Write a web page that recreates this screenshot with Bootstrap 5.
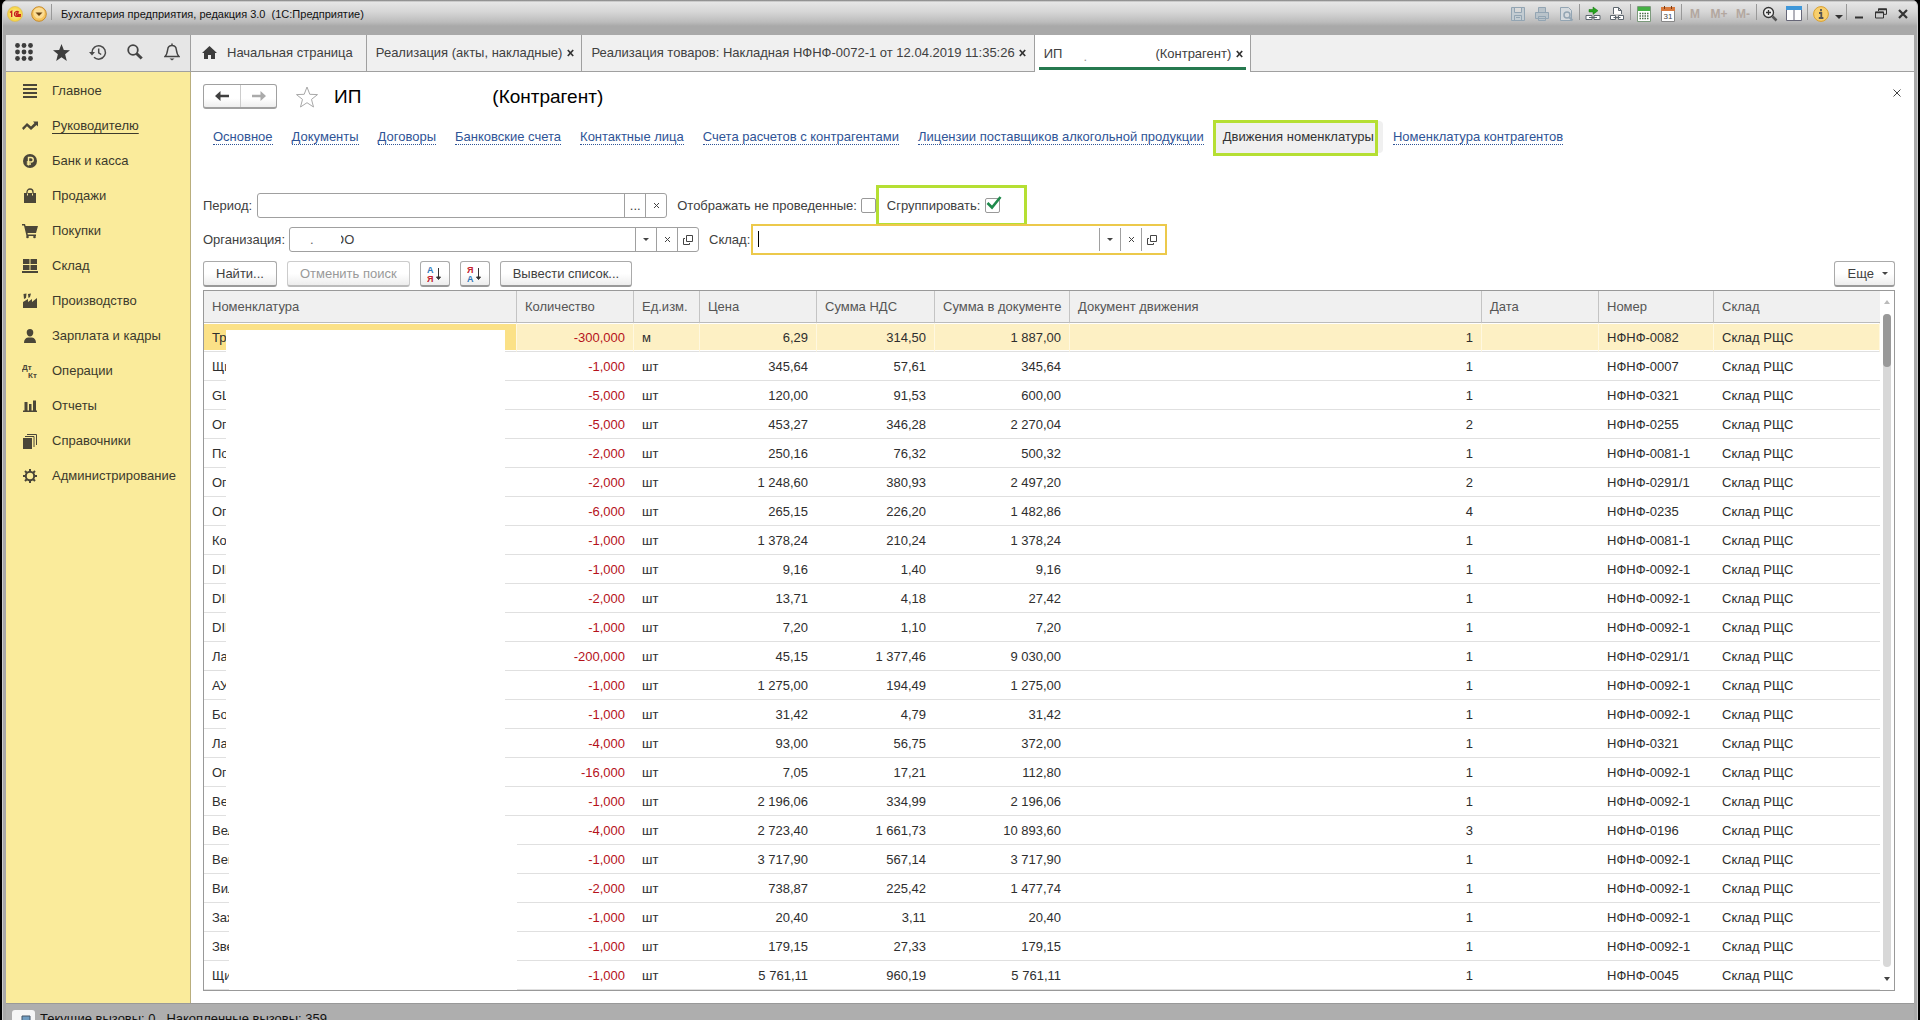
<!DOCTYPE html>
<html lang="ru">
<head>
<meta charset="utf-8">
<meta name="viewport" content="width=device-width, initial-scale=1">
<title>Бухгалтерия предприятия, редакция 3.0 (1С:Предприятие)</title>
<link href="https://cdn.jsdelivr.net/npm/bootstrap@5.3.0/dist/css/bootstrap.min.css" rel="stylesheet">
<style>
  :root { --ink:#404040; --line:#a0a0a0; --panel:#f0f0f0; --lime:#b5df33; }
  body { height:100vh; overflow:hidden; font-family:"Liberation Sans",Arial,sans-serif; font-size:13px; line-height:16px; color:var(--ink); background:#000; }
  button, input { font:inherit; color:inherit; }
  svg { display:block; flex:none; }
  .frame { min-height:100vh; margin:0 2px; padding:0 3px; background:#a8a8a8; border-left:1px solid #ccc; border-right:1px solid #ccc; border-radius:6px 6px 0 0; overflow:hidden; }
  .titlebar { height:35px; padding:1px 3px 9px 4px; margin:0 -3px; color:#111; font-size:11px; background:linear-gradient(#777 0,#e6e6e6 2px,#d6d6d6 12px,#bcbcbc 22px,#a9a9a9 26px,#a9a9a9 100%); }
  .bare { border:0; background:none; padding:0; display:flex; align-items:center; justify-content:center; }
  .tb { width:24px; height:24px; }
  .win { width:22px; height:24px; }
  .drop { width:12px; height:24px; padding-top:6px; }
  .sep { width:1px; height:16px; margin:0 1px 4px; background:#999; }
  .mem { color:#b3a79f; font-weight:bold; font-size:12px; }
  .tools { height:37px; background:var(--panel); border-bottom:1px solid var(--line); }
  .quick { width:185px; flex:none; background:#e6e6e6; border-right:1px solid var(--line); padding:0 0 2px 0; }
  .quick .bare { width:37px; }
  .tab { height:36px; padding:0 6px 0 9px; gap:3px; border-right:1px solid var(--line); white-space:nowrap; color:var(--ink); text-decoration:none; }
  .tab.home { padding:0 13px 0 11px; gap:10px; }
  .tab.on { background:#fff; box-shadow:inset 4px 0 #fff, inset -4px 0 #fff, inset 0 -2px #fff, inset 0 -5px #26794f; height:37px; }
  .tab .bare { width:10px; height:16px; }
  .gap-name { width:87px; padding-left:18px; padding-top:6px; color:#999; }
  .side { width:185px; flex:none; background:#faeb9b; border-right:1px solid #b9ae7d; padding-top:1px; }
  .side a { height:35px; padding-left:16px; gap:14px; color:#3c3a2c; text-decoration:none; }
  .side a.hot span { text-decoration:underline; text-underline-offset:3px; }
  .side svg { fill:#4a4638; }
  .page { background:#fff; padding:12px 19px 12px 12px; min-width:0; }
  .pair { border:1px solid var(--line); border-bottom-width:2px; border-radius:3px; background:linear-gradient(#fff 60%,#eee); height:25px; }
  .pair .bare { width:36px; height:22px; }
  .pair .bare + .bare { border-left:1px solid #ccc; }
  .star { margin:0 15px 0 18px; }
  .mask-name { width:131px; }
  .shut { margin-right:-6px; }
  h1 { font-size:19px; line-height:24px; color:#000; margin:0; font-weight:400; }
  .links { margin-top:12px; padding-left:1px; gap:1px; }
  .links a { padding:8px 9px; color:#2f5496; text-decoration:none; white-space:nowrap; position:relative; }
  .links a span { border-bottom:1px dotted #2f5496; }
  .links a.now { background:#f0f0f0; color:#333; border-radius:4px; }
  .links a.now span { border:0; }
  .ring { position:absolute; border:3px solid var(--lime); pointer-events:none; }
  .links .ring { inset:-1px 5px -3px -1px; }
  .filters { margin-top:40px; gap:9px; }
  .cap { margin-right:5px; }
  .fld { height:25px; width:410px; border:1px solid var(--line); border-radius:3px; background:#fff; margin-right:10px; position:relative; }
  .fld input { border:0; outline:0; background:none; min-width:0; flex:1; padding:0 4px; }
  .fld .bare { width:21px; border-left:1px solid var(--line); }
  .fld.focus { border:2px solid #ecc94b; width:416px; height:31px; border-radius:0; padding:2px 3px 2px 0; margin:-3px 0 -3px 1px; }
  .fld.focus .bare { height:23px; }
  .caret { width:1px; height:16px; margin:3px 0 0 5px; background:#000; }
  .fld input.org { padding-left:44px; }
  .hide-org { position:absolute; left:20px; top:4px; width:31px; height:17px; background:#fff; color:#666; }
  .chk { appearance:none; width:15px; height:15px; margin:0; border:1px solid #999; border-radius:2px; background:#fff; }
  .tickwrap { position:relative; display:flex; }
  .tickwrap svg { position:absolute; left:1px; top:-2px; pointer-events:none; }
  .grouped { position:relative; padding-left:11px; }
  .grouped .ring { inset:-13px -27px -12px 0; }
  .cmds { gap:10px; margin-top:9px; height:26px; }
  .cmd { height:26px; border:1px solid #aaa; border-bottom:2px solid #999; border-radius:3px; background:linear-gradient(#fff 50%,#ededed); padding:0 12px; white-space:nowrap; }
  .cmd:disabled { color:#999; border-color:#ccc; border-bottom-color:#bbb; }
  .cmd.pic { padding:0; width:30px; display:flex; align-items:center; justify-content:center; }
  .cmd.more { padding:0 6px 0 13px; gap:8px; }
  .grid { margin-top:3px; border:1px solid #999; position:relative; }
  .grid table { table-layout:fixed; width:100%; border-collapse:separate; border-spacing:0; }
  .grid th { height:32px; padding:0 8px; background:#f0f0f0; font-weight:400; color:#555; border-bottom:1px solid #bbb; border-right:1px solid #c4c4c4; white-space:nowrap; }
  .grid th:last-child { border-right:0; }
  .grid td { height:29px; padding:1px 8px 0; border-bottom:1px solid #e0e0e0; white-space:nowrap; color:#2e2e2e; }
  .grid td.num, .grid td.neg { text-align:right; padding-right:9px; }
  .grid td.neg { color:#b5121b; }
  .grid tr.sel td { background:#fdf0c4; border-right:1px solid #fff8e0; box-shadow:inset 0 1px #fff, inset 0 -1px #fff; }
  .grid tr.sel td.num, .grid tr.sel td.neg { padding-right:8px; }
  .grid tr.sel td:first-child { background:#fbe187; }
  .dot { margin-right:4px; color:#999; }
  .cover { position:absolute; background:#fff; }
  .cover.up { left:22px; width:279px; top:39px; height:488px; }
  .cover.low { left:25px; width:288px; top:526px; bottom:0; }
  .scroller { width:14px; flex:none; padding:9px 0; display:flex; flex-direction:column; align-items:center; gap:10px; }
  .track { width:8px; flex:1; border-radius:4px; background:#d8d8d8; }
  .thumb { height:53px; border-radius:4px; background:#999; }
  .status { height:40px; padding:6px; background:#aeaeae; border-top:1px solid #999; color:#111; gap:5px; }
  .stat { width:23px; height:23px; background:#f6f6f6; border-radius:3px; }
  .stat-text { padding-top:1px; }
</style>
</head>
<body>
<div class="frame">
  <header class="titlebar d-flex align-items-center">
    <button class="bare me-2" aria-label="1С"><svg width="16" height="16" viewBox="0 0 16 16"><defs><radialGradient id="g1"><stop offset="0" stop-color="#fff6a0"/><stop offset="1" stop-color="#f4cf3c"/></radialGradient></defs><circle cx="8" cy="8" r="7.6" fill="url(#g1)" stroke="#d9b95a" stroke-width=".6"/><path d="M3 6.5 4.7 5.3V11M11.8 6.3C10.600 5 7.400 5.200 7.400 8S9.700 10.200 14 10.200M11.500 7.600C10.500 6.700 9.200 7 9.200 8.100S10.500 8.700 14 8.700" fill="none" stroke="#c8201c" stroke-width="1.300"/></svg></button>
    <button class="bare" aria-label="Меню"><svg width="16" height="16" viewBox="0 0 16 16"><circle cx="8" cy="8" r="7.300" fill="#f6c35c" stroke="#c58a2c"/><circle cx="8" cy="7" r="5.500" fill="#fbdc94"/><path d="M4.500 6.500h7L8 10z" fill="#6a4312"/></svg></button>
    <span class="sep ms-1"></span>
    <span class="ms-2">Бухгалтерия предприятия, редакция 3.0 &nbsp;(1С:Предприятие)</span>
    <div class="ms-auto d-flex align-items-center">
      <button class="bare tb" aria-label="Сохранить"><svg width="16" height="16" fill="none" stroke="#93a5b3"><path d="M1.500 1.500h13v13h-13zM4.500 1.500v5h7v-5M4.500 14.500v-5h7v5M6 11.500h4" fill="#c3ccd2"/></svg></button>
      <button class="bare tb" aria-label="Печать"><svg width="16" height="16" fill="#b9c3ca" stroke="#93a5b3"><path d="M4.500 6V1.500h7V6M1.500 6.500h13v6h-13zM4.500 10.500h7v4h-7z"/></svg></button>
      <button class="bare tb" aria-label="Просмотр"><svg width="16" height="16" fill="#d5dade" stroke="#93a5b3"><path d="M2.500 1.500h8l3 3v10h-11z"/><circle cx="9" cy="9" r="3" stroke-width="1.500"/><path d="m11 11 3.500 3.500" stroke-width="2"/></svg></button>
      <span class="sep"></span>
      <button class="bare tb" aria-label="Перейти по ссылке"><svg width="18" height="16" fill="none"><path d="M5 3.500h4V1l5 3.700-5 3.700V6H5z" fill="#27a51f" stroke="#14730f" stroke-width=".5"/><path d="M2 9.500h6v4H2zM10 9.500h6v4h-6zM5 11.500h8" stroke="#5d666e" fill="#fff"/></svg></button>
      <button class="bare tb" aria-label="Получить ссылку"><svg width="16" height="16" fill="#fff" stroke="#5d666e"><path d="M4.500 8V1.500h5l3 3V8M9.500 1.500v3h3"/><path d="M1.500 9.500h5v4h-5zM9.500 9.500h5v4h-5zM4.500 11.500h7"/></svg></button>
      <span class="sep"></span>
      <button class="bare tb" aria-label="Калькулятор"><svg width="14" height="16"><path fill="#fff" stroke="#7c9a7c" d="M.5.5h13v15H.5z"/><path fill="#45b044" d="M1 1h12v4H1z"/><path d="M2.500 7.500h10M2.500 10h10M2.500 12.500h10" stroke="#4c6e4c" stroke-width="1.500" stroke-dasharray="1.500 1"/></svg></button>
      <button class="bare tb" aria-label="Календарь"><svg width="14" height="16"><path fill="#fff" stroke="#888" d="M.5 1.500h13v14H.5z"/><path fill="#d9793c" d="M0 1h14v4H0z"/><path d="M3.500 0v3M10.500 0v3" stroke="#7a3d14"/><text x="7" y="13" font-size="8" font-family="Liberation Sans" text-anchor="middle" fill="#444">31</text></svg></button>
      <span class="sep"></span>
      <button class="bare tb mem">M</button><button class="bare tb mem">M+</button><button class="bare tb mem">M-</button>
      <span class="sep"></span>
      <button class="bare tb" aria-label="Масштаб"><svg width="16" height="16" fill="#eee" stroke="#333" stroke-width="1.300"><circle cx="6.500" cy="6.500" r="5"/><path d="M4 6.500h5M6.500 4v5"/><path d="m10.500 10.500 4 4" stroke-width="2.500" stroke="#555"/></svg></button>
      <button class="bare tb" aria-label="Панели"><svg width="16" height="16"><path fill="#fff" stroke="#667" d="M.5.5h15v14H.5z"/><path fill="#3f97d9" d="M0 0h16v4H0z"/><path d="M8 4v11" stroke="#667"/></svg></button>
      <span class="sep"></span>
      <button class="bare tb" aria-label="О программе"><svg width="16" height="16"><circle cx="8" cy="8" r="7.400" fill="#f8cf6d" stroke="#d9a030"/><path d="M8 3v2.200M6 7h2.300v5M5.800 12h4.600" stroke="#555" stroke-width="1.800" fill="none"/></svg></button>
      <button class="bare drop" aria-label="Ещё"><svg width="8" height="4"><path d="M0 0h8L4 4z" fill="#333"/></svg></button>
      <span class="sep"></span>
      <button class="bare win" aria-label="Свернуть"><svg width="10" height="12"><path d="M1 9.500h8" stroke="#333" stroke-width="2"/></svg></button>
      <button class="bare win" aria-label="Восстановить"><svg width="12" height="11" fill="none" stroke="#333"><path d="M3.500 3V.8h8v5.500H9M.5 4h8v6h-8z"/><path d="M3 1.500h9M0 4.500h9" stroke-width="1.500"/></svg></button>
      <button class="bare win" aria-label="Закрыть"><svg width="10" height="10"><path d="m1 1 8 8M9 1 1 9" stroke="#333" stroke-width="2.200"/></svg></button>
    </div>
  </header>

  <div class="tools d-flex">
    <div class="quick d-flex">
      <button class="bare" aria-label="Все функции"><svg width="18" height="18" fill="#3d3d3d"><g id="dots"><circle cx="2.500" cy="2.500" r="2.400"/><circle cx="9" cy="2.500" r="2.400"/><circle cx="15.500" cy="2.500" r="2.400"/></g><use href="#dots" y="6.500"/><use href="#dots" y="13"/></svg></button>
      <button class="bare" aria-label="Избранное"><svg width="17" height="17" viewBox="0 0 16 16" fill="#3d3d3d"><path d="m8 0 2.200 5.700 5.800.2-4.600 3.700L13 16l-5-3.500L3 16l1.600-6.400L0 5.900l5.800-.2z"/></svg></button>
      <button class="bare" aria-label="История"><svg width="18" height="17" fill="none" stroke="#4a4a4a" stroke-width="1.500"><path d="M3 8.500A6.700 6.700 0 1 1 5 13.200M9.700 4.500v4.300l2.500 1.700"/><path d="M0 8h6L3 11.500z" fill="#4a4a4a" stroke="none"/></svg></button>
      <button class="bare" aria-label="Поиск"><svg width="16" height="16" fill="none" stroke="#444"><circle cx="6" cy="6" r="4.800" stroke-width="1.800"/><path d="m9.500 9.500 5.200 5" stroke-width="3"/></svg></button>
      <button class="bare" aria-label="Уведомления"><svg width="16" height="18" fill="none" stroke="#444" stroke-width="1.500"><path d="M1 13.500c2-1.800 2.200-3.500 2.700-7C4 3.800 5.500 2.500 8 2.500s4 1.300 4.300 4c.5 3.500.7 5.200 2.700 7zM8 .5v2"/><path d="M5.500 15.500h5L8 17.500z" fill="#444" stroke="none"/></svg></button>
    </div>
    <a href="#" class="tab home d-flex align-items-center"><svg width="15" height="14" fill="#3d3d3d"><path d="M7.500 0 15 7h-2v6H9V9H6v4H2V7H0z"/></svg>Начальная страница</a>
    <a href="#" class="tab d-flex align-items-center">Реализация (акты, накладные)<span class="bare"><svg width="7" height="8"><use href="#xb"/></svg></span></a>
    <a href="#" class="tab d-flex align-items-center">Реализация товаров: Накладная НФНФ-0072-1 от 12.04.2019 11:35:26<span class="bare"><svg width="7" height="8"><use href="#xb"/></svg></span></a>
    <a href="#" class="tab on d-flex align-items-center">ИП<span class="gap-name">.</span>(Контрагент)<span class="bare"><svg width="7" height="8"><path id="xb" d="m.8 1 5.400 6M6.200 1 .8 7" stroke="#333" stroke-width="1.700"/></svg></span></a>
  </div>

  <div class="d-flex">
    <nav class="side d-flex flex-column">
      <a href="#" class="d-flex align-items-center"><svg width="16" height="16"><path d="M1 1h14v2H1zM1 5h14v2H1zM1 9h14v2H1zM1 13h14v2H1z"/></svg><span>Главное</span></a>
      <a href="#" class="hot d-flex align-items-center"><svg width="16" height="16"><path d="M0 10 5 5l4 3.500L12.500 5 11 3.500h5v5L14.500 7 9 12 5 8.300 1.500 12z"/></svg><span>Руководителю</span></a>
      <a href="#" class="d-flex align-items-center"><svg width="16" height="16"><circle cx="8" cy="8" r="7"/><path d="M6.500 12.500V4.500H9a2 2 0 0 1 0 4.500H4.800M4.800 11H9" stroke="#faeb9b" stroke-width="1.400" fill="none"/></svg><span>Банк и касса</span></a>
      <a href="#" class="d-flex align-items-center"><svg width="16" height="16"><path d="M2 5h12v10H2z"/><path d="M5 7V4a3 3 0 0 1 6 0v3" fill="none" stroke="#4a4638" stroke-width="1.300"/><path d="M5.500 5.500v2M10.500 5.500v2" stroke="#faeb9b"/></svg><span>Продажи</span></a>
      <a href="#" class="d-flex align-items-center"><svg width="16" height="16"><path d="M0 1h3l.6 2H16l-2 7H5.500l.3 1.500H14V13H4.500L2 2.500H0z"/><circle cx="5.500" cy="14" r="1.300"/><circle cx="12.500" cy="14" r="1.300"/></svg><span>Покупки</span></a>
      <a href="#" class="d-flex align-items-center"><svg width="16" height="16"><path d="M1 1h6.500v5H1zM8.500 1H15v5H8.500zM1 7h6.500v5H1zM8.500 7H15v5H8.500zM0 13h16v2H0z"/></svg><span>Склад</span></a>
      <a href="#" class="d-flex align-items-center"><svg width="16" height="16"><path d="M1 15V9l5-3v3l4-3v3l5-4v10zM1.500 1l3-.5L4 5l-2 1zM6 1l3-.5L8 4 6.500 5z"/></svg><span>Производство</span></a>
      <a href="#" class="d-flex align-items-center"><svg width="16" height="16"><path d="M8 1c2.200 0 3.300 1.500 3.300 3.500S10 8.500 8 8.500 4.700 6.500 4.700 4.500 5.800 1 8 1zM2 15c0-3.500 1.500-5 4-5.500h4c2.500.5 4 2 4 5.500z"/></svg><span>Зарплата и кадры</span></a>
      <a href="#" class="d-flex align-items-center"><svg width="16" height="16" font-family="Liberation Sans" font-weight="bold" font-size="8"><text x="0" y="7">Дт</text><text x="6" y="15">Кт</text></svg><span>Операции</span></a>
      <a href="#" class="d-flex align-items-center"><svg width="16" height="16"><path d="M1 12.500h14V14H1zM2.500 4h3v9h-3zM7 6h2.500v7H7zM11 2.500h3V13h-3z"/></svg><span>Отчеты</span></a>
      <a href="#" class="d-flex align-items-center"><svg width="16" height="16"><path d="M1 5h9v11H1z"/><path d="M3 3.500h9V14M5 1.500h9.500V12" fill="none" stroke="#4a4638"/></svg><span>Справочники</span></a>
      <a href="#" class="d-flex align-items-center"><svg width="16" height="16"><circle cx="8" cy="8" r="4.200" fill="none" stroke="#4a4638" stroke-width="2"/><path d="M8 1v3M8 12v3M1 8h3M12 8h3M3 3l2 2M11 11l2 2M13 3l-2 2M5 11l-2 2" stroke="#4a4638" stroke-width="2"/></svg><span>Администрирование</span></a>
    </nav>

    <main class="page flex-grow-1">
      <div class="d-flex align-items-center">
        <div class="pair d-flex">
          <button class="bare" aria-label="Назад"><svg width="14" height="10"><path d="M0 5 5.500 0v3.700H14v2.600H5.500V10z" fill="#404040"/></svg></button>
          <button class="bare" aria-label="Вперед"><svg width="14" height="10"><path d="M14 5 8.500 0v3.700H0v2.600h8.500V10z" fill="#aaa"/></svg></button>
        </div>
        <button class="bare star" aria-label="В избранное"><svg width="24" height="22"><path d="m12 1 2.800 7.300 7.700.3-6 4.800 2 7.600-6.500-4.300L5.500 21l2-7.600-6-4.800 7.700-.3z" fill="#fff" stroke="#a8a8a8"/></svg></button>
        <h1 class="d-flex">ИП<span class="mask-name"></span>(Контрагент)</h1>
        <button class="bare shut ms-auto mb-2" aria-label="Закрыть форму"><svg width="8" height="8"><path d="m.5.500 7 7M7.500.500l-7 7" stroke="#444"/></svg></button>
      </div>

      <nav class="links d-flex">
        <a href="#"><span>Основное</span></a><a href="#"><span>Документы</span></a><a href="#"><span>Договоры</span></a><a href="#"><span>Банковские счета</span></a><a href="#"><span>Контактные лица</span></a><a href="#"><span>Счета расчетов с контрагентами</span></a><a href="#"><span>Лицензии поставщиков алкогольной продукции</span></a><a href="#" class="now"><span>Движения номенклатуры</span><i class="ring"></i></a><a href="#"><span>Номенклатура контрагентов</span></a>
      </nav>

      <div class="filters d-flex flex-column">
        <div class="d-flex align-items-center">
          <label for="per" class="cap">Период:</label>
          <div class="fld d-flex"><input id="per" type="text"><button class="bare" aria-label="Выбрать период">...</button><button class="bare" aria-label="Очистить"><svg width="7" height="7"><use href="#xs"/></svg></button></div>
          <label for="np" class="me-1">Отображать не проведенные:</label>
          <input id="np" type="checkbox" class="chk">
          <div class="grouped d-flex align-items-center"><label for="gr" class="cap">Сгруппировать:</label><span class="tickwrap"><input id="gr" type="checkbox" class="chk" checked><svg width="16" height="15"><path d="m1.500 7 4.500 4.500L14.500 1" fill="none" stroke="#1f8a4c" stroke-width="2.600"/></svg></span><i class="ring"></i></div>
        </div>
        <div class="d-flex align-items-center">
          <label for="org" class="me-1">Организация:</label>
          <div class="fld d-flex"><input id="org" type="text" class="org" value="ОО"><span class="hide-org">.</span><button class="bare" aria-label="Список"><svg width="6" height="3"><path id="car" d="M0 0h6L3 3z" fill="#444"/></svg></button><button class="bare" aria-label="Очистить"><svg width="7" height="7"><path id="xs" d="m1 1 5 5M6 1 1 6" stroke="#444"/></svg></button><button class="bare" aria-label="Открыть"><svg width="10" height="10"><path id="op" d="M3.500.5h6v6h-6zM2 3.500H.5v6h6V8" fill="none" stroke="#444"/></svg></button></div>
          <label for="skl">Склад:</label>
          <div class="fld focus d-flex"><span class="caret"></span><input id="skl" type="text"><button class="bare" aria-label="Список"><svg width="6" height="3"><use href="#car"/></svg></button><button class="bare" aria-label="Очистить"><svg width="7" height="7"><use href="#xs"/></svg></button><button class="bare" aria-label="Открыть"><svg width="10" height="10"><use href="#op"/></svg></button></div>
        </div>
      </div>

      <div class="cmds d-flex">
        <button class="cmd">Найти...</button>
        <button class="cmd" disabled>Отменить поиск</button>
        <button class="cmd pic" aria-label="По возрастанию"><svg width="16" height="18" font-family="Liberation Sans" font-weight="bold" font-size="9"><text x="0" y="8" fill="#2c76b8">А</text><text x="0" y="17" fill="#c4202c">Я</text><path d="M11.500 3v9M9.500 12h4l-2 2.500z" fill="#333" stroke="#333"/></svg></button>
        <button class="cmd pic" aria-label="По убыванию"><svg width="16" height="18" font-family="Liberation Sans" font-weight="bold" font-size="9"><text x="0" y="8" fill="#c4202c">Я</text><text x="0" y="17" fill="#2c76b8">А</text><path d="M11.500 3v9M9.500 12h4l-2 2.500z" fill="#333" stroke="#333"/></svg></button>
        <button class="cmd">Вывести список...</button>
        <button class="cmd more ms-auto d-flex align-items-center">Еще<svg width="6" height="3"><use href="#car"/></svg></button>
      </div>

      <div class="grid d-flex">
        <table>
          <colgroup><col style="width:313px"><col style="width:117px"><col style="width:66px"><col style="width:117px"><col style="width:118px"><col style="width:135px"><col><col style="width:117px"><col style="width:115px"><col style="width:166px"></colgroup>
          <thead><tr><th>Номенклатура</th><th>Количество</th><th>Ед.изм.</th><th>Цена</th><th>Сумма НДС</th><th>Сумма в документе</th><th>Документ движения</th><th>Дата</th><th>Номер</th><th>Склад</th></tr></thead>
          <tbody id="rows"></tbody>
        </table>
        <div class="scroller">
          <svg width="6" height="4"><path d="M0 4h6L3 0z" fill="#bbb"/></svg>
          <div class="track"><div class="thumb"></div></div>
          <svg width="6" height="4"><path d="M0 0h6L3 4z" fill="#444"/></svg>
        </div>
        <div class="cover up"></div><div class="cover low"></div>
      </div>
    </main>
  </div>

  <footer class="status d-flex"><span class="stat d-flex align-items-center justify-content-center"><svg width="14" height="14"><path d="M5 1h8v7H5z" fill="#6f9cc0" stroke="#456"/><path d="M1 6h7v6H1z" fill="#a9c6de" stroke="#567"/></svg></span><span class="stat-text">Текущие вызовы: 0 &nbsp;&nbsp;Накопленные вызовы: 359</span></footer>
</div>
<script>
  const data = `Тру|-300,000|м|6,29|314,50|1 887,00|1|НФНФ-0082
Щи|-1,000|шт|345,64|57,61|345,64|1|НФНФ-0007
GL|-5,000|шт|120,00|91,53|600,00|1|НФНФ-0321
Оп|-5,000|шт|453,27|346,28|2 270,04|2|НФНФ-0255
По|-2,000|шт|250,16|76,32|500,32|1|НФНФ-0081-1
Оп|-2,000|шт|1 248,60|380,93|2 497,20|2|НФНФ-0291/1
Оп|-6,000|шт|265,15|226,20|1 482,86|4|НФНФ-0235
Ко|-1,000|шт|1 378,24|210,24|1 378,24|1|НФНФ-0081-1
DIN.|-1,000|шт|9,16|1,40|9,16|1|НФНФ-0092-1
DIN|-2,000|шт|13,71|4,18|27,42|1|НФНФ-0092-1
DIN.|-1,000|шт|7,20|1,10|7,20|1|НФНФ-0092-1
Ла|-200,000|шт|45,15|1 377,46|9 030,00|1|НФНФ-0291/1
АУ|-1,000|шт|1 275,00|194,49|1 275,00|1|НФНФ-0092-1
Бо|-1,000|шт|31,42|4,79|31,42|1|НФНФ-0092-1
Ла|-4,000|шт|93,00|56,75|372,00|1|НФНФ-0321
Оп|-16,000|шт|7,05|17,21|112,80|1|НФНФ-0092-1
Ве|-1,000|шт|2 196,06|334,99|2 196,06|1|НФНФ-0092-1
Вел|-4,000|шт|2 723,40|1 661,73|10 893,60|3|НФНФ-0196
Вен|-1,000|шт|3 717,90|567,14|3 717,90|1|НФНФ-0092-1
Вил|-2,000|шт|738,87|225,42|1 477,74|1|НФНФ-0092-1
Заж|-1,000|шт|20,40|3,11|20,40|1|НФНФ-0092-1
Зве|-1,000|шт|179,15|27,33|179,15|1|НФНФ-0092-1
Щит|-1,000|шт|5 761,11|960,19|5 761,11|1|НФНФ-0045`;
  document.getElementById('rows').innerHTML = data.split('\n').map((line, i) => {
    const [name, qty, unit, price, vat, sum, docs, no] = line.split('|');
    const label = name.endsWith('.') ? `<div class="d-flex justify-content-between">${name.slice(0, -1)}<span class="dot">.</span></div>` : name;
    return `<tr${i ? '' : ' class="sel"'}><td>${label}</td><td class="neg">${qty}</td><td>${unit}</td><td class="num">${price}</td><td class="num">${vat}</td><td class="num">${sum}</td><td class="num">${docs}</td><td></td><td>${no}</td><td>Склад РЩС</td></tr>`;
  }).join('');
</script>
<script src="https://cdn.jsdelivr.net/npm/bootstrap@5.3.0/dist/js/bootstrap.bundle.min.js"></script>
</body>
</html>
